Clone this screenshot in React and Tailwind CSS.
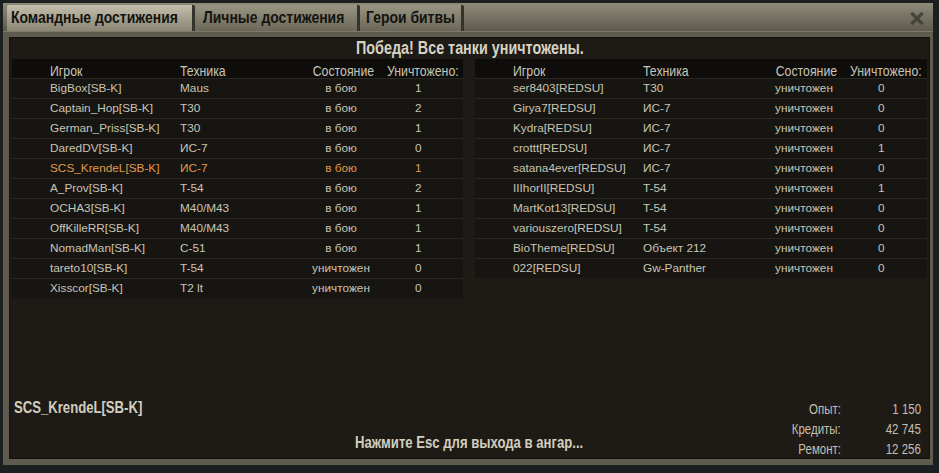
import React from "react";

const ARIAL = "font-['Liberation_Sans','Arial',sans-serif]";

function N({ children, origin = "origin-left", className = "" }) {
  return (
    <span className={"inline-block whitespace-nowrap scale-x-[0.82] " + origin + " " + ARIAL + " " + className}>
      {children}
    </span>
  );
}

const left = [
  ["BigBox[SB-K]", "Maus", "в бою", "1"],
  ["Captain_Hop[SB-K]", "T30", "в бою", "2"],
  ["German_Priss[SB-K]", "T30", "в бою", "1"],
  ["DaredDV[SB-K]", "ИС-7", "в бою", "0"],
  ["SCS_KrendeL[SB-K]", "ИС-7", "в бою", "1", true],
  ["A_Prov[SB-K]", "T-54", "в бою", "2"],
  ["OCHA3[SB-K]", "M40/M43", "в бою", "1"],
  ["OffKilleRR[SB-K]", "M40/M43", "в бою", "1"],
  ["NomadMan[SB-K]", "C-51", "в бою", "1"],
  ["tareto10[SB-K]", "T-54", "уничтожен", "0"],
  ["Xisscor[SB-K]", "T2 lt", "уничтожен", "0"],
];

const right = [
  ["ser8403[REDSU]", "T30", "уничтожен", "0"],
  ["Girya7[REDSU]", "ИС-7", "уничтожен", "0"],
  ["Kydra[REDSU]", "ИС-7", "уничтожен", "0"],
  ["crottt[REDSU]", "ИС-7", "уничтожен", "1"],
  ["satana4ever[REDSU]", "ИС-7", "уничтожен", "0"],
  ["IIIhorII[REDSU]", "T-54", "уничтожен", "1"],
  ["MartKot13[REDSU]", "T-54", "уничтожен", "0"],
  ["variouszero[REDSU]", "T-54", "уничтожен", "0"],
  ["BioTheme[REDSU]", "Объект 212", "уничтожен", "0"],
  ["022[REDSU]", "Gw-Panther", "уничтожен", "0"],
];

function Table({ rows, className }) {
  return (
    <div className={"flex flex-col " + className}>
      <div className="grid grid-cols-[38px_130px_126px_70px_1fr] h-[19px] items-center bg-[#0e0d0b] text-[15px] text-[#c9c5b5]">
        <div />
        <div><N>Игрок</N></div>
        <div><N>Техника</N></div>
        <div className="text-center"><N origin="origin-center">Состояние</N></div>
        <div className="pl-[11px]"><N>Уничтожено:</N></div>
      </div>
      {rows.map((r, i) => (
        <div
          key={i}
          className={
            "grid grid-cols-[38px_130px_126px_70px_1fr] h-[20px] items-center bg-[#171511] border-t border-[#2a2722] text-[11.8px] " +
            ARIAL +
            (r[4] ? " text-[#e09a4c]" : " text-[#c8c4b4]")
          }
        >
          <div />
          <div className="whitespace-nowrap">{r[0]}</div>
          <div className="whitespace-nowrap">{r[1]}</div>
          <div className="text-center whitespace-nowrap">{r[2]}</div>
          <div className="pl-[39px]">{r[3]}</div>
        </div>
      ))}
    </div>
  );
}

export default function App() {
  return (
    <div className="w-[939px] h-[473px] bg-[#1c1f1f] pt-[3px] pl-[3px] pr-[6px] pb-[8px] overflow-hidden">
      <div className="flex flex-col h-full w-full">
        {/* tab bar */}
        <div className="flex items-end h-[28px] bg-gradient-to-b from-[#8f8b7a] to-[#5e5b4e] pl-[4px] pr-[4px]">
          <div className="w-[188px] h-[26px] pl-[4px] flex items-center overflow-visible rounded-t-[2px] bg-gradient-to-b from-[#c4bfac] to-[#8a8674] text-[#141310] font-bold text-[17px] border-r-[3px] border-[#35332b]">
            <N>Командные достижения</N>
          </div>
          <div className="w-[165px] h-[26px] pl-[8px] flex items-center overflow-visible rounded-t-[2px] bg-gradient-to-b from-[#9a9683] to-[#6a6758] text-[#141310] font-bold text-[17px] border-r-[3px] border-[#35332b]">
            <N>Личные достижения</N>
          </div>
          <div className="w-[104px] h-[26px] pl-[6px] flex items-center overflow-visible rounded-t-[2px] bg-gradient-to-b from-[#9a9683] to-[#6a6758] text-[#141310] font-bold text-[17px] border-r-[3px] border-[#35332b]">
            <N>Герои битвы</N>
          </div>
          <div className="flex-1" />
          <div className="h-[26px] flex items-center pr-[5px]">
            <svg width="14" height="13" viewBox="0 0 14 13">
              <path d="M2.5 2 L11.5 11 M11.5 2 L2.5 11" stroke="#45433a" strokeWidth="3.2" strokeLinecap="square" />
            </svg>
          </div>
        </div>
        {/* frame */}
        <div className="flex-1 bg-[#5f5b4e] border-t border-[#7d7968] px-[6px] pt-[5px] pb-[6px] flex">
          <div className="flex-1 flex flex-col bg-[#1e1b17] border border-[#141210] px-[2px]">
            <div className="h-[20px] flex items-center justify-center font-bold text-[17.5px] text-[#d6d2c2]">
              <N origin="origin-center">Победа! Все танки уничтожены.</N>
            </div>
            <div className="flex items-start gap-[12px] mt-[1px]">
              <Table rows={left} className="w-[451px]" />
              <Table rows={right} className="w-[452px]" />
            </div>
            <div className="flex-1" />
            <div className="grid grid-cols-[1fr_auto_1fr] items-start">
              <div className="pl-[2px] h-[20px] flex items-end pb-[2px] leading-none font-bold text-[16px] text-[#d2cebe]">
                <N>SCS_KrendeL[SB-K]</N>
              </div>
              <div className="self-end h-[30px] pb-[7px] flex items-end leading-none font-bold text-[16px] text-[#d2cebe]">
                <N origin="origin-center">Нажмите Esc для выхода в ангар...</N>
              </div>
              <div className="justify-self-end pr-[6px] text-[14px] text-[#c3bfaf]">
                {[
                  ["Опыт:", "1 150"],
                  ["Кредиты:", "42 745"],
                  ["Ремонт:", "12 256"],
                ].map(([k, v]) => (
                  <div key={k} className="flex h-[20px] items-end pb-[2px] leading-none">
                    <div className="w-[80px] text-right"><N origin="origin-right">{k}</N></div>
                    <div className="w-[80px] text-right"><N origin="origin-right">{v}</N></div>
                  </div>
                ))}
              </div>
            </div>
          </div>
        </div>
      </div>
    </div>
  );
}
